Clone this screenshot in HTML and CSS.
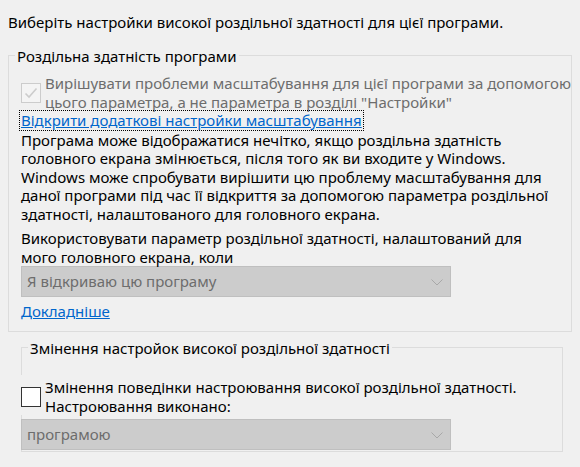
FILE: index.html
```html
<!DOCTYPE html>
<html lang="uk">
<head>
<meta charset="utf-8">
<link rel="stylesheet" href="styles.css">
</head>
<body>
<div class="page">
  <div class="title">Виберіть настройки високої роздільної здатності для цієї програми.</div>

  <fieldset class="group group-app">
    <legend class="legend legend-app">Роздільна здатність програми</legend>
    <div class="check-row">
      <span class="box box-disabled">
        <svg width="14" height="12" viewBox="0 0 14 12"><path d="M1.5 6.5 L5 10 L12.5 1.5" fill="none" stroke="#cccccc" stroke-width="1.6"/></svg>
      </span>
      <span class="check-label disabled">Вирішувати проблеми масштабування для цієї програми за допомогою<br>цього параметра, а не параметра в розділі "Настройки"</span>
    </div>
    <div class="link-row"><a class="link focused" href="#">Відкрити додаткові настройки масштабування</a></div>
    <p class="para">Програма може відображатися нечітко, якщо роздільна здатність<br>головного екрана змінюється, після того як ви входите у Windows.<br>Windows може спробувати вирішити цю проблему масштабування для<br>даної програми під час її відкриття за допомогою параметра роздільної<br>здатності, налаштованого для головного екрана.</p>
    <p class="para para-use">Використовувати параметр роздільної здатності, налаштований для<br>мого головного екрана, коли</p>
    <div class="select">
      <span class="select-text">Я відкриваю цю програму</span>
      <svg class="chevron" width="12" height="7" viewBox="0 0 12 7"><path d="M0.5 0.5 L6 6 L11.5 0.5" fill="none" stroke="#a8a8a8" stroke-width="1"/></svg>
    </div>
    <div class="more-row"><a class="link" href="#">Докладніше</a></div>
  </fieldset>

  <fieldset class="group group-override">
    <legend class="legend">Змінення настройок високої роздільної здатності</legend>
    <div class="check-row check-row-override">
      <span class="box box-enabled"></span>
      <span class="check-label">Змінення поведінки настроювання високої роздільної здатності.<br>Настроювання виконано:</span>
    </div>
    <div class="select select-override">
      <span class="select-text">програмою</span>
      <svg class="chevron" width="12" height="7" viewBox="0 0 12 7"><path d="M0.5 0.5 L6 6 L11.5 0.5" fill="none" stroke="#a8a8a8" stroke-width="1"/></svg>
    </div>
  </fieldset>
</div>
</body>
</html>
```

FILE: styles.css
```css
html, body {
  margin: 0;
  padding: 0;
  background: #f0f0f0;
}

body {
  font-family: "Noto Sans", "Open Sans", sans-serif;
  font-size: 15px;
  line-height: 18.5px;
  color: #000000;
}

.page {
  padding: 13px 8px 0 8px;
  width: 564px;
}

.title {
  white-space: nowrap;
}

.group {
  margin: 0;
  padding: 0;
  border: 1px solid #dcdcdc;
  min-width: 0;
}

.legend {
  margin-left: 6px;
  padding: 0 2px;
  white-space: nowrap;
}

.legend-app {
  margin-left: -6px;
}

.group-app {
  margin-top: 15px;
  width: 564px;
  box-sizing: border-box;
  padding: 9px 12px 10px 12px;
}

.check-row {
  display: flex;
  align-items: center;
  gap: 4px;
}

.box {
  flex: none;
  width: 20px;
  height: 20px;
  box-sizing: border-box;
  display: flex;
  align-items: center;
  justify-content: center;
}

.box-disabled {
  border: 1px solid #cccccc;
  background: #f4f4f4;
}

.box-enabled {
  border: 1px solid #333333;
  background: #ffffff;
}

.check-label {
  white-space: nowrap;
}

.disabled {
  color: #6d6d6d;
}

.link {
  color: #0066cc;
  text-decoration: underline;
  white-space: nowrap;
}

.link-row {
  display: flex;
}

.focused {
  display: inline-block;
  outline: 1px dotted #000000;
  outline-offset: 0;
  padding: 0 1px;
  margin-left: -1px;
}

.para {
  margin: 1px 0 0 0;
  white-space: nowrap;
}

.para-use {
  margin-top: 6px;
}

.select {
  width: 430px;
  height: 31px;
  box-sizing: border-box;
  background: #cccccc;
  border: 1px solid #bfbfbf;
  display: flex;
  align-items: center;
  justify-content: space-between;
  padding: 0 7px 0 5px;
  color: #6d6d6d;
}

.chevron {
  display: block;
  margin-top: 1px;
}

.more-row {
  margin-top: 5px;
}

.group-override {
  margin-top: 7px;
  margin-left: 13px;
  width: 542px;
  box-sizing: border-box;
  padding: 18px 0 1px 0;
}

.check-row-override {
  position: relative;
  margin-left: -1px;
  padding-top: 3px;
  background: #f0f0f0;
}

.select-override {
  margin-top: 4px;
  margin-left: -1px;
}
```
